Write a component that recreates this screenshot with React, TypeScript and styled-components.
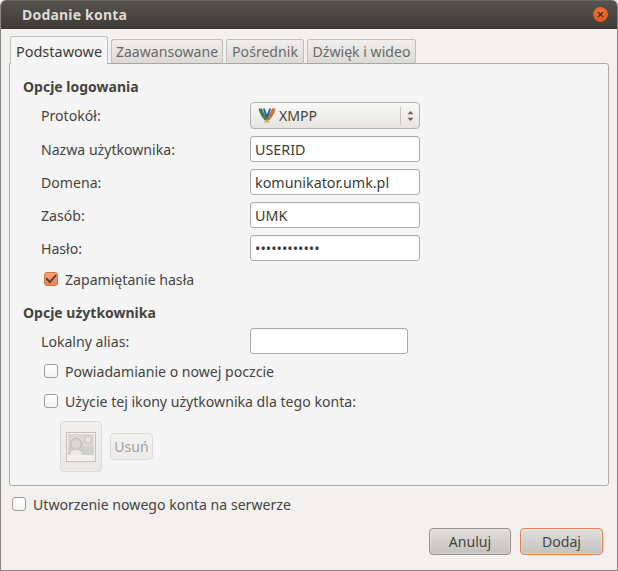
import React from "react";
import styled, { createGlobalStyle } from "styled-components";

const Global = createGlobalStyle`
  html, body { margin: 0; padding: 0; background: #f2f1f0; }
  * { box-sizing: border-box; }
`;

const Window = styled.div`
  width: 618px; height: 571px;
  display: flex; flex-direction: column;
  background: #f2f1f0;
  border: 1px solid #8a8883;
  border-top: 0;
  border-radius: 6px 6px 0 0;
  overflow: hidden;
  font-family: "Noto Sans", "Open Sans", sans-serif;
  font-size: 14.1px;
  color: #45443f;
`;
const TitleBar = styled.div`
  height: 29px; flex: none;
  display: flex; align-items: center; justify-content: space-between;
  padding: 0 9px 2px 21px;
  background: linear-gradient(#54534d, #3c3b37);
  border-top: 1px solid #6a6963;
`;
const Title = styled.span`
  color: #dfdbd2; font-weight: 700; font-size: 14px; letter-spacing: 0.2px;
`;
const CloseDot = styled.div`
  width: 15px; height: 15px; border-radius: 50%;
  background: radial-gradient(circle at 50% 35%, #f5793f, #d9480f);
  display: flex; align-items: center; justify-content: center;
`;
const Body = styled.div`
  flex: 1; display: flex; flex-direction: column;
  padding: 7px 9px 14px 8px;
`;
const Tabs = styled.div`
  display: flex; align-items: flex-end; gap: 3px;
  padding-left: 1px; height: 28px; position: relative; z-index: 1;
`;
const Tab = styled.div<{ $active?: boolean; $w: number }>`
  width: ${(p) => p.$w}px;
  height: ${(p) => (p.$active ? 28 : 25)}px;
  display: flex; align-items: center; justify-content: center;
  border: 1px solid #c2bfba;
  border-bottom: ${(p) => (p.$active ? "0" : "1px solid #a8a59f")};
  border-radius: 3px 3px 0 0;
  color: ${(p) => (p.$active ? "#3c3b37" : "#6a6966")};
  background: ${(p) => (p.$active ? "#f5f5f5" : "linear-gradient(#f0efee, #dcdad6)")};
  font-size: ${(p) => (p.$active ? 14.5 : 14.1)}px;
`;
const Panel = styled.div`
  width: 600px; height: 423px; margin-top: -1px;
  background: #f5f5f5;
  border: 1px solid #aeaba5;
  border-radius: 0 3px 3px 3px;
  padding: 13px 13px 0 13px;
  display: flex; flex-direction: column;
`;
const Section = styled.div<{ $mt?: number }>`
  font-weight: 700; font-size: 14px; line-height: 20px;
  margin-top: ${(p) => p.$mt ?? 0}px;
`;
const FormGrid = styled.div`
  display: grid; grid-template-columns: 209px 170px;
  margin: 5px 0 0 18px; row-gap: 7px;
  align-items: center;
`;
const Label = styled.label`
  font-size: 14.1px;
`;
const Field = styled.div<{ $w?: number }>`
  width: ${(p) => p.$w ?? 170}px; height: 26px;
  background: #fff;
  border: 1px solid #b0ada7;
  border-radius: 3px;
  padding: 0 4px;
  display: flex; align-items: center;
  font-size: 14.3px; color: #3c3b37;
  box-shadow: inset 0 1px 1px rgba(0,0,0,.06);
`;
const Select = styled.div`
  width: 170px; height: 27px;
  display: flex; align-items: center; gap: 3px;
  padding-left: 7px;
  border: 1px solid #b5b2ac;
  border-radius: 4px;
  background: linear-gradient(#f9f9f8, #e6e4e1);
  font-size: 14.1px;
`;
const SelectValue = styled.span`
  flex: 1;
`;
const Spin = styled.div`
  width: 19px; height: 18px;
  border-left: 1px solid #c9c6c1;
  display: flex; align-items: center; justify-content: center;
`;
const CheckRow = styled.div<{ $mt: number; $ml: number }>`
  display: flex; align-items: center; gap: 7px;
  height: 20px; margin-top: ${(p) => p.$mt}px; margin-left: ${(p) => p.$ml}px;
`;
const Box = styled.div<{ $on?: boolean }>`
  width: 14px; height: 14px; border-radius: 3px; flex: none;
  border: 1px solid ${(p) => (p.$on ? "#d9703f" : "#a09d97")};
  background: ${(p) => (p.$on ? "linear-gradient(#f6a27c, #ec8453)" : "linear-gradient(#fff, #f4f3f2)")};
  display: flex; align-items: center; justify-content: center;
`;
const AliasRow = styled.div`
  display: grid; grid-template-columns: 209px 158px;
  align-items: center; margin: 5px 0 0 18px;
`;
const IconRow = styled.div`
  display: flex; align-items: center; gap: 8px;
  margin: 10px 0 0 37px;
`;
const IconButton = styled.div`
  width: 42px; height: 51px;
  border: 1px solid #dcdad6; border-radius: 4px;
  background: linear-gradient(#f1f0ef, #e9e8e6);
  display: flex; align-items: center; justify-content: center;
`;
const Disabled = styled.div`
  width: 43px; height: 27px;
  border: 1px solid #dcdad6; border-radius: 4px;
  background: linear-gradient(#f3f2f1, #ecebe9);
  color: #a3a19d; font-size: 14.1px;
  display: flex; align-items: center; justify-content: center;
`;
const Footer = styled.div`
  display: flex; justify-content: flex-end; gap: 9px;
  margin-top: 14px; padding-right: 5px;
`;
const Button = styled.div<{ $default?: boolean }>`
  width: ${(p) => (p.$default ? 83 : 82)}px; height: 27px;
  display: flex; align-items: center; justify-content: center;
  border-radius: 4px;
  border: 1px solid ${(p) => (p.$default ? "#e9804f" : "#93918c")};
  background: linear-gradient(#e2e0dd, #c3c1bd);
  box-shadow: inset 0 0 0 1px rgba(255,255,255,.25);
`;

const Check = () => (
  <svg width="12" height="12" viewBox="0 0 12 12" fill="none">
    <path d="M1.8 5.8 L4.8 9.2 L10.6 2.6" stroke="#4f4038" strokeWidth="1.9" strokeLinecap="round" strokeLinejoin="round" />
  </svg>
);

const XmppIcon = () => (
  <svg width="18" height="15" viewBox="0 0 18 15">
    <path d="M0.5 0.5 C1.5 6 4.5 10 7 12.5 L9 12.5 C7.5 8 5.5 4.5 4 0.5 Z" fill="#3d7f4c" />
    <path d="M17.5 0.5 C16.5 6 13.5 10 11 12.5 L9 12.5 C10.5 8 12.5 4.5 14 0.5 Z" fill="#d0702c" />
    <path d="M5 0.5 C6 5 7.5 9 9 12.5 C10.5 9 12 5 13 0.5 L11.2 0.5 L9 6.5 L6.8 0.5 Z" fill="#2a5f96" />
    <path d="M5.5 14.5 L9 11.5 L12.5 14.5 Z" fill="#c9b24a" />
  </svg>
);

const Arrows = () => (
  <svg width="7" height="12" viewBox="0 0 7 12" fill="#66645f">
    <path d="M3.5 1 L6.5 4.2 H0.5 Z" />
    <path d="M3.5 11 L6.5 7.8 H0.5 Z" />
  </svg>
);

const PhotoIcon = () => (
  <svg width="30" height="30" viewBox="0 0 30 30">
    <rect x="0.5" y="0.5" width="29" height="29" fill="#f0efee" stroke="#c4c2be" />
    <rect x="2" y="2" width="26" height="21" fill="#d9d8d6" />
    <path d="M2 15 H28 V23 H2 Z" fill="#cfcecb" />
    <circle cx="22" cy="7.5" r="3.5" fill="#e6e5e3" stroke="#c4c2be" />
    <circle cx="10" cy="12" r="5.5" fill="#d8d7d4" stroke="#b9b7b3" />
    <path d="M4 23 C5 16 15 16 16 23 Z" fill="#ecebe9" />
  </svg>
);

export default function App() {
  return (
    <>
      <Global />
      <Window>
        <TitleBar>
          <Title>Dodanie konta</Title>
          <CloseDot>
            <svg width="7" height="7" viewBox="0 0 7 7">
              <path d="M1 1 L6 6 M6 1 L1 6" stroke="#4a2412" strokeWidth="1.3" />
            </svg>
          </CloseDot>
        </TitleBar>
        <Body>
          <Tabs>
            <Tab $active $w={98}>Podstawowe</Tab>
            <Tab $w={112}>Zaawansowane</Tab>
            <Tab $w={78}>Pośrednik</Tab>
            <Tab $w={109}>Dźwięk i wideo</Tab>
          </Tabs>
          <Panel>
            <Section>Opcje logowania</Section>
            <FormGrid>
              <Label>Protokół:</Label>
              <Select>
                <XmppIcon />
                <SelectValue>XMPP</SelectValue>
                <Spin><Arrows /></Spin>
              </Select>
              <Label>Nazwa użytkownika:</Label>
              <Field>USERID</Field>
              <Label>Domena:</Label>
              <Field>komunikator.umk.pl</Field>
              <Label>Zasób:</Label>
              <Field>UMK</Field>
              <Label>Hasło:</Label>
              <Field>••••••••••••</Field>
            </FormGrid>
            <CheckRow $mt={8} $ml={21}>
              <Box $on><Check /></Box>
              Zapamiętanie hasła
            </CheckRow>
            <Section $mt={14}>Opcje użytkownika</Section>
            <AliasRow>
              <Label>Lokalny alias:</Label>
              <Field $w={158}></Field>
            </AliasRow>
            <CheckRow $mt={7} $ml={21}>
              <Box />
              Powiadamianie o nowej poczcie
            </CheckRow>
            <CheckRow $mt={10} $ml={21}>
              <Box />
              Użycie tej ikony użytkownika dla tego konta:
            </CheckRow>
            <IconRow>
              <IconButton><PhotoIcon /></IconButton>
              <Disabled>Usuń</Disabled>
            </IconRow>
          </Panel>
          <CheckRow $mt={8} $ml={3}>
            <Box />
            Utworzenie nowego konta na serwerze
          </CheckRow>
          <Footer>
            <Button>Anuluj</Button>
            <Button $default>Dodaj</Button>
          </Footer>
        </Body>
      </Window>
    </>
  );
}
